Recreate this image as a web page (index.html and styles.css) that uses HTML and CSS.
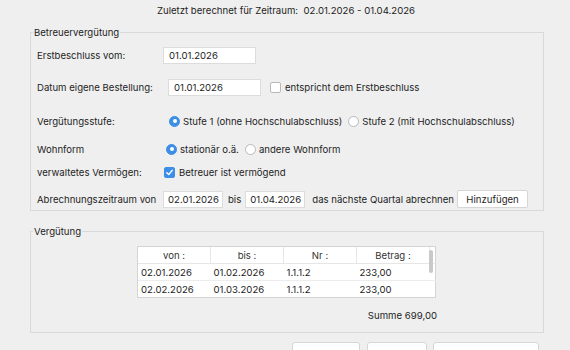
FILE: index.html
```html
<!DOCTYPE html>
<html lang="de">
<head>
  <meta charset="UTF-8" />
  <title>Betreuervergütung</title>
  <link rel="stylesheet" href="styles.css">
</head>
<body>

<div class="title">Zuletzt berechnet für Zeitraum:&nbsp; 02.01.2026 - 01.04.2026</div>

<fieldset class="group group-main">
  <legend>Betreuervergütung</legend>

  <div class="row row-1">
    <span class="label">Erstbeschluss vom:</span>
    <span class="field field-first">01.01.2026</span>
  </div>

  <div class="row row-2">
    <span class="label">Datum eigene Bestellung:</span>
    <span class="field field-own">01.01.2026</span>
    <span class="check"></span>
    <span>entspricht dem Erstbeschluss</span>
  </div>

  <div class="row row-3">
    <span class="label">Vergütungsstufe:</span>
    <span class="radio on shift-3"></span>
    <span>Stufe 1 (ohne Hochschulabschluss)</span>
    <span class="radio gap-radio"></span>
    <span>Stufe 2 (mit Hochschulabschluss)</span>
  </div>

  <div class="row row-4">
    <span class="label">Wohnform</span>
    <span class="radio on"></span>
    <span>stationär o.ä.</span>
    <span class="radio gap-radio"></span>
    <span>andere Wohnform</span>
  </div>

  <div class="row row-5">
    <span class="label">verwaltetes Vermögen:</span>
    <span class="check on">
      <svg viewBox="0 0 10 10" width="9" height="9"><path d="M2 5.2 L4.2 7.3 L8 2.6" fill="none" stroke="#fff" stroke-width="1.6" stroke-linecap="round" stroke-linejoin="round"/></svg>
    </span>
    <span>Betreuer ist vermögend</span>
  </div>

  <div class="row row-6">
    <span class="label">Abrechnungszeitraum von</span>
    <span class="field field-date">02.01.2026</span>
    <span class="bis">bis</span>
    <span class="field field-date">01.04.2026</span>
    <span class="next">das nächste Quartal abrechnen</span>
    <button class="btn">Hinzufügen</button>
  </div>
</fieldset>

<fieldset class="group group-pay">
  <legend>Vergütung</legend>
  <div class="table-wrap">
    <table class="pay-table">
      <thead>
        <tr><th>von :</th><th>bis :</th><th>Nr :</th><th>Betrag :</th><th class="scroll-head"></th></tr>
      </thead>
      <tbody>
        <tr><td>02.01.2026</td><td>01.02.2026</td><td>1.1.1.2</td><td>233,00</td><td class="scroll-cell"></td></tr>
        <tr><td>02.02.2026</td><td>01.03.2026</td><td>1.1.1.2</td><td>233,00</td><td class="scroll-cell"></td></tr>
      </tbody>
    </table>
    <div class="thumb"></div>
  </div>
  <div class="sum">Summe 699,00</div>
</fieldset>

<div class="actions">
  <button class="btn big b1"></button>
  <button class="btn big b2"></button>
  <button class="btn big b3"></button>
</div>

</body>
</html>
```

FILE: styles.css
```css
html, body {
  margin: 0;
  height: 350px;
  overflow: hidden;
}

body {
  background-color: #efefef;
  color: #1e1e1e;
  font-family: 'Inter', 'Roboto', sans-serif;
  font-size: 9.6px;
  width: 570px;
  white-space: nowrap;
}

.title {
  text-align: center;
  padding-top: 4px;
  line-height: 13px;
  height: 13px;
  padding-left: 2px;
}

.group {
  margin: 0 26px 0 30px;
  padding: 0 8px 0 6px;
  border: 1px solid #d9d9d9;
  min-width: 0;
}

.group legend {
  padding: 0 1px;
  margin-left: -4px;
  line-height: 13px;
}

.group-main {
  margin-top: 9px;
  height: 185px;
  box-sizing: border-box;
}

.row {
  display: flex;
  align-items: center;
  height: 18px;
}

.row-1 { margin-top: 7px; }
.row-2 { margin-top: 14px; }
.row-3 { margin-top: 16px; }
.row-4 { margin-top: 10px; }
.row-5 { margin-top: 5px; }
.row-6 { margin-top: 9px; }

.label {
  width: 126px;
  flex-shrink: 0;
}

.field {
  background: #fff;
  border: 1px solid #dcdcdc;
  line-height: 16px;
  padding: 0 5px;
  box-sizing: border-box;
  height: 17px;
}

.field-first { width: 93px; }
.field-own { width: 93px; margin-left: 5px; margin-right: 9px; }
.field-date { width: 60px; padding: 0 4px; overflow: hidden; }
.row-6 .field-date:first-of-type { margin-left: 3px; }

.bis { margin: 0 4px 0 5px; }
.next { margin: 0 3px 0 7px; }

.check {
  width: 9px;
  height: 9px;
  border: 1px solid #b8b8b8;
  border-radius: 2px;
  background: #fff;
  margin-right: 4px;
  display: flex;
  align-items: center;
  justify-content: center;
}

.check.on {
  background: #3d8ee6;
  border-color: #3d8ee6;
  margin-left: 1px;
}

.radio {
  width: 9px;
  height: 9px;
  border: 1px solid #b8b8b8;
  border-radius: 50%;
  background: #fff;
  margin-right: 3px;
  display: flex;
  align-items: center;
  justify-content: center;
}

.radio.on {
  background: #3d8ee6;
  border-color: #3d8ee6;
  margin-left: 3px;
}

.radio.on::after {
  content: '';
  width: 4px;
  height: 4px;
  border-radius: 50%;
  background: #fff;
}

.radio.shift-3 { margin-left: 6px; }
.gap-radio { margin-left: 6px; }

.btn {
  font: inherit;
  color: #1e1e1e;
  background: #fff;
  border: 1px solid #d6d6d6;
  border-radius: 2px;
  height: 18px;
  padding: 0;
  width: 71px;
}

.group-pay {
  margin-top: 14px;
  height: 108px;
  box-sizing: border-box;
}

.table-wrap {
  position: relative;
  margin: 8px 0 0 100px;
  width: 299px;
  border: 1px solid #d4d4d4;
  box-sizing: border-box;
  background: #fff;
}

.pay-table {
  border-collapse: collapse;
  width: 100%;
  table-layout: fixed;
}

.pay-table th {
  font-weight: normal;
  height: 16px;
  border-right: 1px solid #e6e6e6;
  border-bottom: 1px solid #e6e6e6;
  width: 72px;
  padding: 0;
  color: #333;
}

.pay-table td {
  height: 16px;
  padding: 0 0 0 3px;
  border-bottom: 1px solid #ececec;
}

.pay-table tr:last-child td { border-bottom: none; }

.pay-table .scroll-head,
.pay-table .scroll-cell {
  width: 7px;
  border-right: none;
  padding: 0;
}

.thumb {
  position: absolute;
  right: 2px;
  top: 3px;
  width: 4px;
  height: 23px;
  border-radius: 2px;
  background: #c9c9c9;
}

.sum {
  width: 400px;
  text-align: right;
  margin-top: 12px;
}

.actions {
  display: flex;
  justify-content: flex-end;
  gap: 6px;
  margin: 9px 31px 0 0;
}

.btn.big {
  height: 24px;
  border-radius: 3px;
}

.b1 { width: 68px; margin-right: 1px; }
.b2 { width: 60px; }
.b3 { width: 106px; }
```
